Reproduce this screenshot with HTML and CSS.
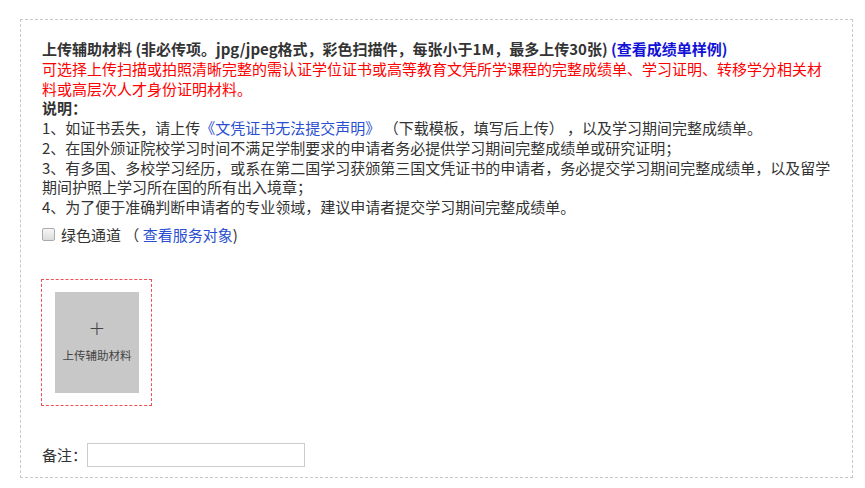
FILE: index.html
```html
<!DOCTYPE html>
<html lang="zh-CN">
<head>
  <meta charset="UTF-8">
  <meta name="viewport" content="width=device-width, initial-scale=1">
  <title>上传辅助材料</title>
  <link rel="stylesheet" href="styles.css">
</head>
<body>

<div class="panel">
  <div class="tips">
    <p class="title">上传辅助材料 (非必传项。jpg/jpeg格式，彩色扫描件，每张小于1M，最多上传30张) <a href="#" class="sample">(查看成绩单样例)</a></p>
    <p class="warn">可选择上传扫描或拍照清晰完整的需认证学位证书或高等教育文凭所学课程的完整成绩单、学习证明、转移学分相关材料或高层次人才身份证明材料。</p>
    <p class="note-head">说明：</p>
    <p>1、如证书丢失，请上传<a href="#" class="doc">《文凭证书无法提交声明》</a> （下载模板，填写后上传） ，以及学习期间完整成绩单。</p>
    <p>2、在国外颁证院校学习时间不满足学制要求的申请者务必提供学习期间完整成绩单或研究证明；</p>
    <p>3、有多国、多校学习经历，或系在第二国学习获颁第三国文凭证书的申请者，务必提交学习期间完整成绩单，以及留学期间护照上学习所在国的所有出入境章；</p>
    <p>4、为了便于准确判断申请者的专业领域，建议申请者提交学习期间完整成绩单。</p>
  </div>

  <label class="green">
    <input type="checkbox" class="check">
    <span>绿色通道 （ <a href="#" class="doc">查看服务对象</a>)</span>
  </label>

  <div class="upload">
    <div class="upload-btn">
      <span class="plus">+</span>
      <span class="upload-text">上传辅助材料</span>
    </div>
  </div>

  <div class="remark">
    <span>备注：</span>
    <input type="text" class="remark-input">
  </div>
</div>

</body>
</html>
```

FILE: styles.css
```css
body {
  margin: 0;
  padding: 0;
  background: #fff;
  font-family: "Noto Sans CJK SC", "Liberation Sans", sans-serif;
  font-size: 15px;
  color: #333;
}
a {
  text-decoration: none;
}
.panel {
  box-sizing: border-box;
  width: 833px;
  margin: 19px 0 0 20px;
  padding: 19px 21px 10px 21px;
  border: 1px dashed #c8c8c8;
}
.tips p {
  margin: 0;
  line-height: 19.75px;
}
.title {
  font-weight: bold;
}
.sample {
  color: #1212d6;
}
.warn {
  color: #ff0000;
}
.note-head {
  font-weight: bold;
}
.doc {
  color: #2a4fd0;
}
.green {
  display: flex;
  align-items: center;
  gap: 6px;
  margin-top: 8px;
  height: 20px;
  color: #333;
}
.check {
  appearance: none;
  -webkit-appearance: none;
  width: 13px;
  height: 13px;
  margin: 0;
  border: 1px solid #aaa;
  border-radius: 2px;
  background: linear-gradient(#f6f6f6, #dcdcdc);
}
.upload {
  box-sizing: border-box;
  width: 111px;
  height: 127px;
  margin: 34px 0 0 -1px;
  padding: 12px 13px;
  border: 1px dashed #f05050;
}
.upload-btn {
  width: 84px;
  height: 101px;
  background: #c8c8c8;
  display: flex;
  flex-direction: column;
  align-items: center;
  justify-content: center;
  color: #444;
}
.plus {
  font-family: "DejaVu Sans", sans-serif;
  font-size: 20px;
  font-weight: 300;
  line-height: 22px;
  margin-top: -4px;
}
.upload-text {
  font-size: 11.5px;
  margin-top: 8px;
}
.remark {
  display: flex;
  align-items: center;
  margin-top: 37px;
  height: 24px;
}
.remark-input {
  box-sizing: border-box;
  width: 218px;
  height: 24px;
  margin: 0;
  border: 1px solid #ccc;
  padding: 2px 4px;
}
```
